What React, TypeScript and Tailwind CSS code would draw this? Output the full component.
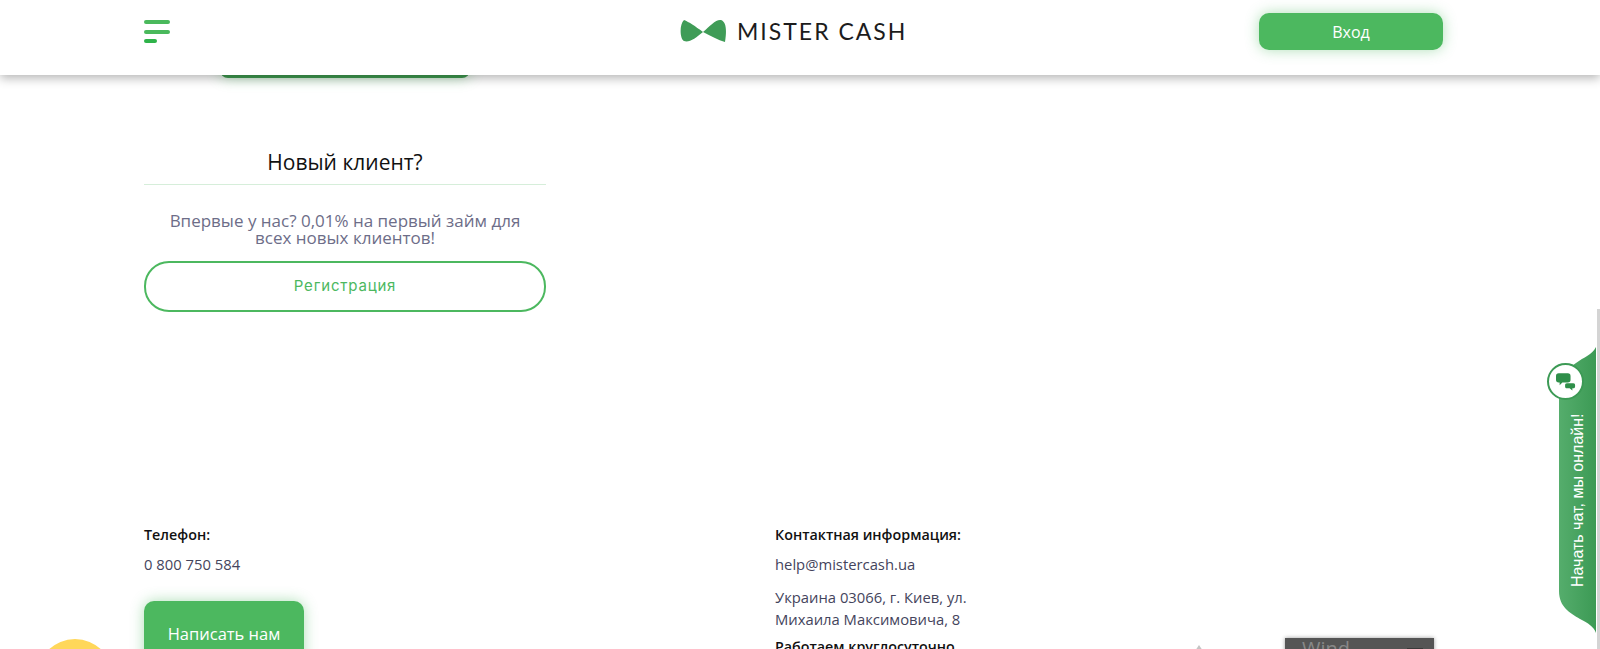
const openSans = { fontFamily: '"Open Sans", sans-serif' };

function BowTie() {
  return (
    <svg width="47" height="24" viewBox="0 0 47 24" className="shrink-0">
      <path
        d="M4 1 C9 3 15 7 23 13 C30 7 36 0 41 1 C46 3 47 10 45 23 C38 21 31 17 23 13 C16 19 9 24 4 22 C0 20 -1 6 4 1 Z"
        fill="#3f9c57"
      />
    </svg>
  );
}

function Header() {
  return (
    <header className="absolute inset-x-0 top-0 z-20 h-[75px] bg-white shadow-[0_3px_10px_rgba(0,0,0,0.3)]">
      <div className="flex h-full items-start pl-[144px] pr-[157px]">
        <div className="mt-[20px] flex w-[26px] flex-col gap-[5.5px]">
          <span className="h-[4px] w-[26px] rounded-full bg-[#4ab95c]" />
          <span className="h-[4px] w-[26px] rounded-full bg-[#4ab95c]" />
          <span className="h-[4px] w-[13px] rounded-full bg-[#2fb34a]" />
        </div>
        <div className="ml-[510px] mt-[19px] flex items-center gap-[10px]">
          <BowTie />
          <span className="text-[23px] leading-[24px] tracking-[2px] text-[#1c1c1c] font-['Lato',sans-serif]">MISTER CASH</span>
        </div>
        <button className="ml-auto mt-[13px] h-[37px] w-[184px] rounded-[10px] bg-[#4cb85f] text-[16px] font-medium text-white shadow-[0_0_14px_rgba(76,184,95,0.45)]" style={openSans}>
          Вход
        </button>
      </div>
    </header>
  );
}

function ChatTab() {
  return (
    <div className="absolute right-[3px] top-[345px] z-10 h-[290px] w-[41px]">
      <svg width="41" height="290" viewBox="0 0 41 290" className="absolute inset-0">
        <defs>
          <linearGradient id="tab" x1="0" x2="1" y1="0" y2="0">
            <stop offset="0" stopColor="#55ad6c" />
            <stop offset="1" stopColor="#3c9a55" />
          </linearGradient>
        </defs>
        <path d="M40 2 C36 10 28 12 20 18 L3 30 L3 246 C3 262 14 268 24 274 C32 278 38 282 40 288 Z" fill="url(#tab)" />
      </svg>
      <span className="absolute left-[22px] top-[70px] flex h-[170px] w-0 items-center justify-center whitespace-nowrap text-[16px] text-white [writing-mode:vertical-rl] rotate-180 font-['Liberation_Sans',sans-serif]">
        Начать чат, мы онлайн!
      </span>
      <div className="absolute -left-[9px] top-[18px] flex h-[37px] w-[37px] items-center justify-center rounded-full border-2 border-[#3c9a55] bg-white">
        <svg width="20" height="19" viewBox="0 0 22 20">
          <path d="M3 1 H13 C15 1 16 2 16 4 V8 C16 10 15 11 13 11 H7 L4 14 V11 H3 C1 11 0 10 0 8 V4 C0 2 1 1 3 1 Z" fill="#2f8f4a" />
          <path d="M12 12 H19 C20.500 12 21 13 21 14 V15.500 C21 17 20 17.500 19 17.500 H18 V20 L15 17.500 H12 C10.500 17.500 10 16.500 10 15.500 V14 C10 13 10.500 12 12 12 Z" fill="#2f8f4a" />
        </svg>
      </div>
    </div>
  );
}

export default function App() {
  return (
    <div className="relative h-[649px] w-[1600px] overflow-hidden bg-white" style={openSans}>
      <Header />

      <main className="pl-[144px]">
        <div className="ml-[76px] h-[78px] w-[250px] rounded-b-[8px] bg-[#3f9c50] shadow-[0_0_14px_rgba(76,184,95,0.4)]" />

        <section className="mt-[71px] w-[402px]">
          <h2 className="border-b border-[#d6eeda] pb-[8px] text-center text-[21px] leading-[27px] text-[#111]">Новый клиент?</h2>
          <p className="mt-[27px] px-[20px] text-center text-[17px] leading-[17px] text-[#6d6d88]">
            Впервые у нас? 0,01% на первый займ для всех новых клиентов!
          </p>
          <button className="mt-[15px] h-[51px] w-full rounded-[25px] border-2 border-[#4cb85f] text-[15px] tracking-[0.8px] text-[#4cb85f] font-['Inter',sans-serif]">
            Регистрация
          </button>
        </section>

        <footer className="mt-[213px] grid w-[1000px] grid-cols-[631px_1fr] text-[14.8px]">
          <div>
            <div className="text-[14.3px] font-semibold leading-[20px] text-[#111]">Телефон:</div>
            <div className="mt-[9px] leading-[20px] text-[#44445c]">0 800 750 584</div>
            <button className="mt-[27px] h-[80px] w-[160px] rounded-[10px] bg-[#4cb85f] pb-[14px] text-[16.500px] text-white shadow-[0_0_14px_rgba(76,184,95,0.45)]">
              Написать нам
            </button>
          </div>
          <div>
            <div className="text-[14.3px] font-semibold leading-[20px] text-[#111]">Контактная информация:</div>
            <div className="mt-[9px] leading-[20px] text-[#44445c]">help@mistercash.ua</div>
            <div className="mt-[12px] w-[220px] leading-[22px] text-[#44445c]">Украина 03066, г. Киев, ул. Михаила Максимовича, 8</div>
            <div className="mt-[7px] text-[14.3px] font-semibold leading-[20px] text-[#111]">Работаем круглосуточно</div>
          </div>
        </footer>
      </main>

      <ChatTab />

      <div className="absolute left-[37px] top-[639px] h-[76px] w-[76px] rounded-full bg-[#ffd75a]" />
      <svg width="10" height="6" viewBox="0 0 10 6" className="absolute left-[1194px] top-[645px]">
        <path d="M5 0 L9 6 H1 Z" fill="#c4c4c4" />
      </svg>
      <div className="absolute left-[1285px] top-[638px] h-[40px] w-[149px] bg-[#555] px-[17px] text-[20px] leading-[22px] text-[#888] shadow-[0_0_4px_rgba(0,0,0,0.4)]">
        Wind
        <span className="absolute left-[122px] top-[10px] h-[10px] w-[16px] bg-[#3a3a3a]" />
      </div>
      <div className="absolute right-0 top-[309px] h-[340px] w-[3px] bg-[#d4d4d4]" />
    </div>
  );
}
